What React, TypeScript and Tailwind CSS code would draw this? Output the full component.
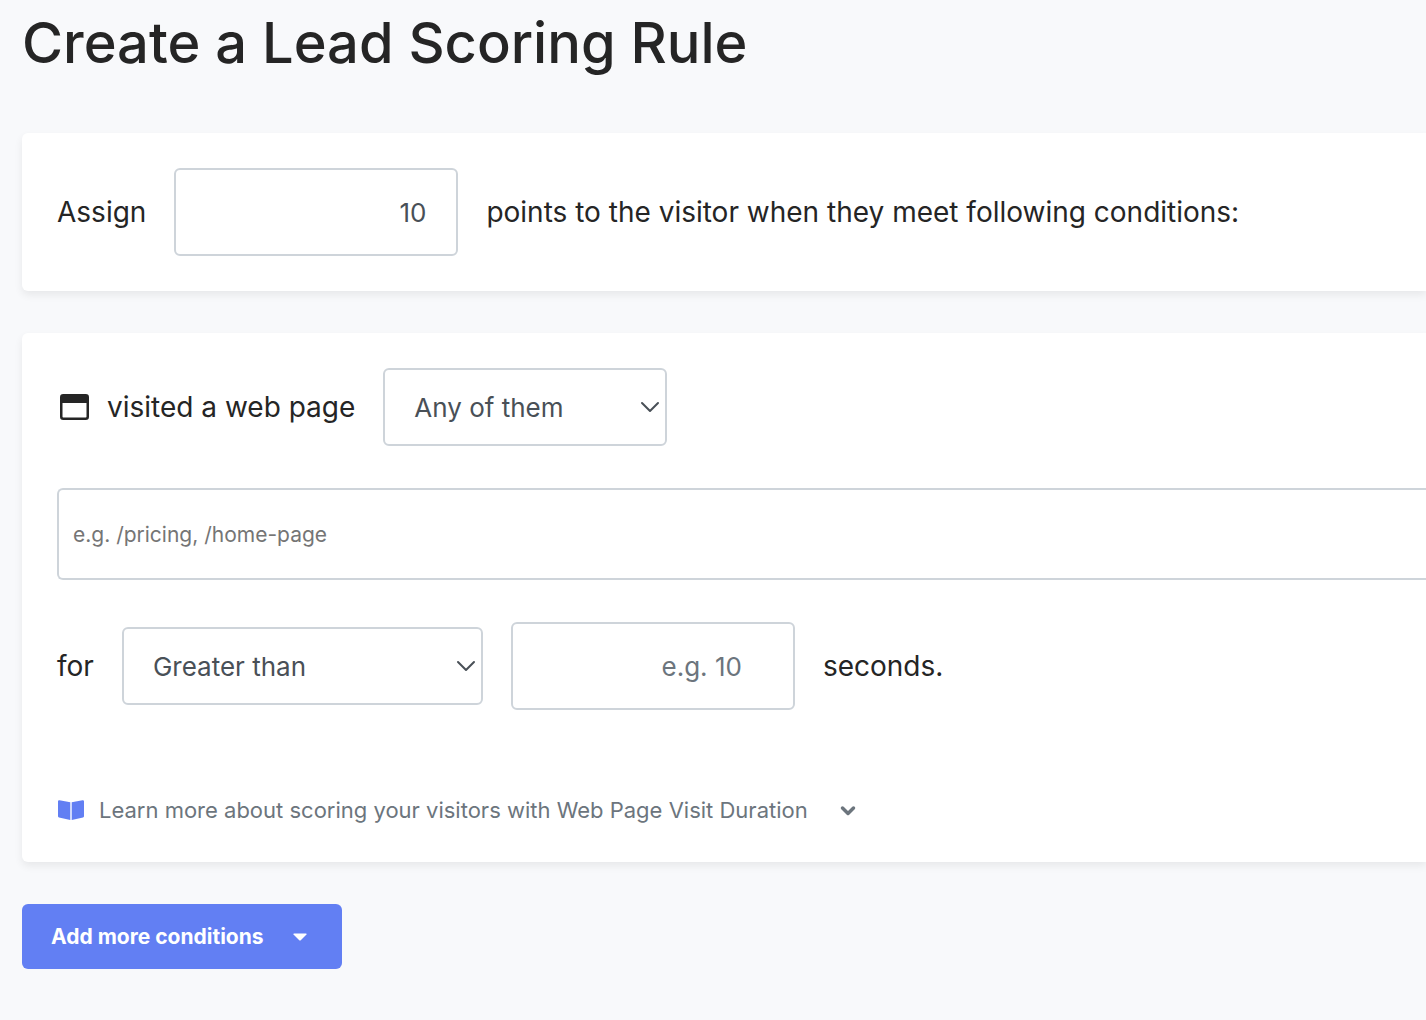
import { useState } from "react";

const fieldStyles = "rounded-md border-2 border-[#ced4da] bg-white text-[#495057]";

const chevron = (
  <svg
    viewBox="0 0 20 12"
    className="pointer-events-none absolute top-1/2 right-[7px] h-3 w-5 -translate-y-1/2"
    fill="none"
    stroke="#495057"
    strokeWidth="2"
    strokeLinecap="round"
    strokeLinejoin="round"
  >
    <path d="M2 2l8 8 8-8" />
  </svg>
);

export default function App() {
  const [points, setPoints] = useState("10");
  const [match, setMatch] = useState("any");
  const [pages, setPages] = useState("");
  const [operator, setOperator] = useState("gt");
  const [seconds, setSeconds] = useState("");

  return (
    <main className="min-h-screen overflow-hidden bg-[#f8f9fb] pl-[22px] font-['Inter',sans-serif] text-[28px] text-[#252525]">
      <h1 className="pt-2 text-[56px] leading-[70px] font-medium">Create a Lead Scoring Rule</h1>

      <section className="mt-[55px] flex items-center gap-7 rounded-l-md bg-white p-[35px] shadow-[0_4px_8px_rgba(0,0,0,0.07)]">
        <label htmlFor="points">Assign</label>
        <input
          id="points"
          type="text"
          value={points}
          onChange={(e) => setPoints(e.target.value)}
          className={`h-[88px] w-[284px] px-[30px] text-right text-[26px] ${fieldStyles}`}
        />
        <span>points to the visitor when they meet following conditions:</span>
      </section>

      <section className="mt-[42px] rounded-l-md bg-white py-[35px] pl-[35px] shadow-[0_4px_8px_rgba(0,0,0,0.07)]">
        <div className="flex items-center">
          <svg viewBox="0 0 29 26" className="ml-[3px] h-[26px] w-[29px]" fill="none">
            <rect x="1.25" y="1.25" width="26.5" height="23.5" rx="2" stroke="#252525" strokeWidth="2.5" />
            <path d="M1 2h27v7H1z" fill="#252525" />
          </svg>
          <label htmlFor="match" className="ml-[18px]">visited a web page</label>
          <div className="relative ml-7">
            <select
              id="match"
              value={match}
              onChange={(e) => setMatch(e.target.value)}
              className={`block h-[78px] w-[284px] appearance-none px-[29px] text-[26px] ${fieldStyles}`}
            >
              <option value="any">Any of them</option>
              <option value="all">All of them</option>
            </select>
            {chevron}
          </div>
        </div>

        <input
          type="text"
          aria-label="Web pages"
          placeholder="e.g. /pricing, /home-page"
          value={pages}
          onChange={(e) => setPages(e.target.value)}
          className="mt-[42px] block h-[92px] w-full rounded-l-md border-2 border-r-0 border-[#ced4da] px-[14px] text-[21px] placeholder:text-[#757575]"
        />

        <div className="mt-[42px] flex items-center gap-7">
          <label htmlFor="operator">for</label>
          <div className="relative">
            <select
              id="operator"
              value={operator}
              onChange={(e) => setOperator(e.target.value)}
              className={`block h-[78px] w-[361px] appearance-none px-[29px] text-[26px] ${fieldStyles}`}
            >
              <option value="gt">Greater than</option>
              <option value="lt">Less than</option>
            </select>
            {chevron}
          </div>
          <input
            id="seconds"
            type="text"
            placeholder="e.g. 10"
            value={seconds}
            onChange={(e) => setSeconds(e.target.value)}
            className={`h-[88px] w-[284px] pr-[51px] text-right text-[26px] placeholder:text-[#6c757d] ${fieldStyles}`}
          />
          <label htmlFor="seconds">seconds.</label>
        </div>

        <button type="button" className="mt-[84px] flex items-center text-[22px] leading-[33px] text-[#6c757d]">
          <svg viewBox="0 0 28 22" className="h-[22px] w-7" fill="#627ff3">
            <path d="M1 1.2Q1 0 2.5.2L13.300 2.300V20L2 17.600Q1 17.300 1 16.300zM27 1.200Q27 0 25.500.2L14.700 2.300V20L26 17.600Q27 17.300 27 16.300z" />
          </svg>
          <span className="ml-[14px]">Learn more about scoring your visitors with Web Page Visit Duration</span>
          <svg
            viewBox="0 0 16 12"
            className="ml-8 h-3 w-4"
            fill="none"
            stroke="#6c757d"
            strokeWidth="3.5"
            strokeLinecap="round"
            strokeLinejoin="round"
          >
            <path d="M2.500 3l5.500 5.500L13.500 3" />
          </svg>
        </button>
      </section>

      <button
        type="button"
        className="mt-[42px] flex h-[65px] w-80 items-center rounded-md bg-[#627ff3] pl-[29px] text-[21px] font-bold text-white"
      >
        Add more conditions
        <svg viewBox="0 0 14 8" className="ml-[29px] h-2 w-3.5" fill="currentColor">
          <path d="M1 .5h12q1.200 0 .5 1L8 7q-1 1-2 0L.5 1.500Q-.2.5 1 .5z" />
        </svg>
      </button>
    </main>
  );
}
